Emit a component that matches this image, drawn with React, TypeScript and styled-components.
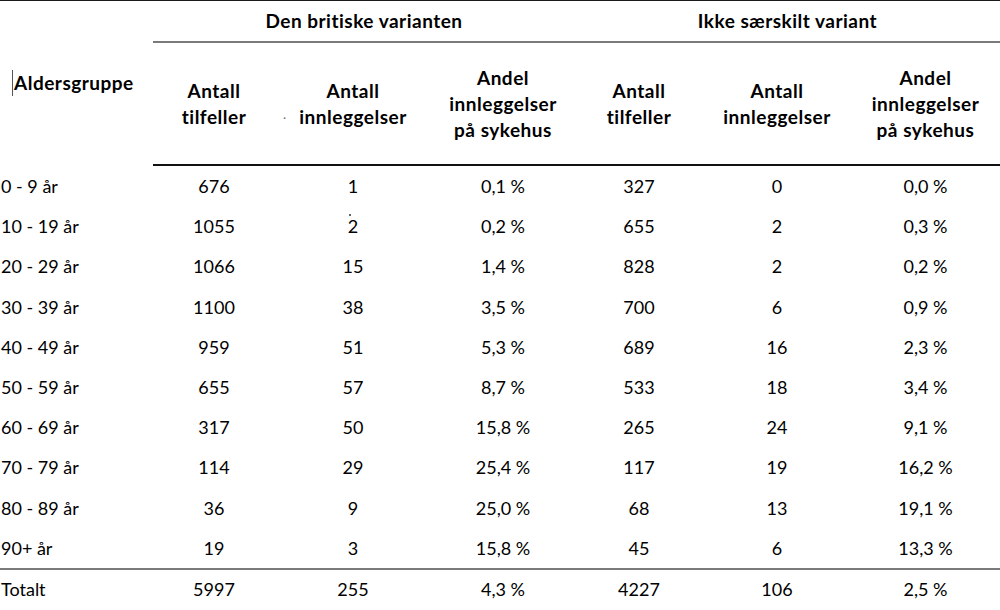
import React, { FC } from 'react'
import styled, { createGlobalStyle } from 'styled-components'

const GlobalStyle = createGlobalStyle`
  html, body {
    margin: 0;
    padding: 0;
    background: #ffffff;
  }
  body {
    font-family: Lato, 'Open Sans', 'Liberation Sans', sans-serif;
    color: #000000;
  }
`

const Table = styled.div`
  width: 1000px;
  display: grid;
  grid-template-columns: 153px 122px 156px 144px 128px 148px 149px;
  grid-template-rows: 42px 123px;
  grid-auto-rows: 40.2px;
  border-top: 1px solid #1a1a1a;
  font-size: 18px;
  line-height: 26px;
`

const Bold = styled.div`
  font-weight: 700;
  font-size: 19px;
  letter-spacing: 0.5px;
`

const AgeHead = styled(Bold)`
  grid-row: 1 / span 2;
  display: flex;
  align-items: center;
  padding: 0 0 2px 12px;
  span {
    border-left: 1px solid #555;
    padding-left: 1px;
  }
`

const GroupHead = styled(Bold)<{ $start: number }>`
  grid-column: ${(p) => p.$start} / span 3;
  grid-row: 1;
  display: flex;
  align-items: center;
  justify-content: center;
  border-bottom: 2px solid #7a7a7a;
  padding-bottom: 1px;
`

const SubHead = styled(Bold)`
  grid-row: 2;
  display: flex;
  align-items: center;
  justify-content: center;
  text-align: center;
  border-bottom: 2px solid #111111;
  position: relative;
`

const Speck = styled.span`
  position: absolute;
  left: 8px;
  top: 62px;
  font-weight: 400;
  font-size: 12px;
  color: #777;
`

const Cell = styled.div<{ $total?: boolean }>`
  display: flex;
  align-items: center;
  justify-content: center;
  position: relative;
  border-top: ${(p) => (p.$total ? '2px solid #7a7a7a' : 'none')};
`

const Label = styled(Cell)`
  justify-content: flex-start;
  padding-left: 1px;
`

const Dot = styled.span`
  position: absolute;
  left: 74px;
  top: 8px;
  width: 2px;
  height: 2px;
  border-radius: 50%;
  background: #333;
`

type Row = [string, string, string, string, string, string, string]

const rows: Row[] = [
  ['0 - 9 år', '676', '1', '0,1 %', '327', '0', '0,0 %'],
  ['10 - 19 år', '1055', '2', '0,2 %', '655', '2', '0,3 %'],
  ['20 - 29 år', '1066', '15', '1,4 %', '828', '2', '0,2 %'],
  ['30 - 39 år', '1100', '38', '3,5 %', '700', '6', '0,9 %'],
  ['40 - 49 år', '959', '51', '5,3 %', '689', '16', '2,3 %'],
  ['50 - 59 år', '655', '57', '8,7 %', '533', '18', '3,4 %'],
  ['60 - 69 år', '317', '50', '15,8 %', '265', '24', '9,1 %'],
  ['70 - 79 år', '114', '29', '25,4 %', '117', '19', '16,2 %'],
  ['80 - 89 år', '36', '9', '25,0 %', '68', '13', '19,1 %'],
  ['90+ år', '19', '3', '15,8 %', '45', '6', '13,3 %'],
]

const total: Row = ['Totalt', '5997', '255', '4,3 %', '4227', '106', '2,5 %']

const SubHeads: FC<{ speck?: boolean }> = ({ speck }) => (
  <>
    <SubHead>
      Antall
      <br />
      tilfeller
    </SubHead>
    <SubHead>
      {speck && <Speck>·</Speck>}
      Antall
      <br />
      innleggelser
    </SubHead>
    <SubHead>
      Andel
      <br />
      innleggelser
      <br />
      på sykehus
    </SubHead>
  </>
)

const DataRow: FC<{ row: Row; total?: boolean; dotAt?: number }> = ({ row, total, dotAt }) => (
  <>
    <Label $total={total}>{row[0]}</Label>
    {row.slice(1).map((v, i) => (
      <Cell key={i} $total={total}>
        {dotAt === i + 1 && <Dot />}
        {v}
      </Cell>
    ))}
  </>
)

const App: FC = () => {
  return (
    <>
      <GlobalStyle />
      <Table>
        <AgeHead>
          <span>Aldersgruppe</span>
        </AgeHead>
        <GroupHead $start={2}>Den britiske varianten</GroupHead>
        <GroupHead $start={5}>Ikke særskilt variant</GroupHead>
        <SubHeads speck />
        <SubHeads />
        {rows.map((r, i) => (
          <DataRow key={r[0]} row={r} dotAt={i === 1 ? 2 : undefined} />
        ))}
        <DataRow row={total} total />
      </Table>
    </>
  )
}

export default App
